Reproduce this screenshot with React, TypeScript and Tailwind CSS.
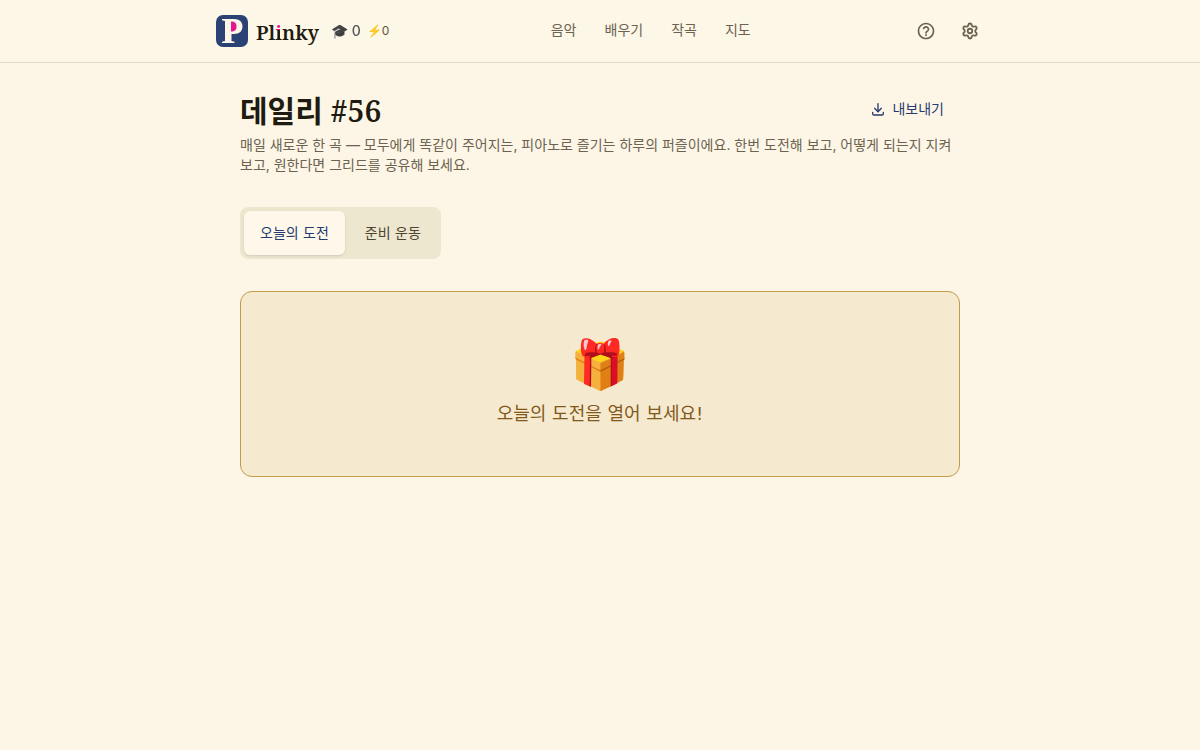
import { Settings } from "lucide-react";
import { useState } from "react";
import { MdHelpOutline } from "react-icons/md";
import { TbDownload } from "react-icons/tb";

const NAV_LINKS = [
  { href: "#music", label: "음악" },
  { href: "#learn", label: "배우기" },
  { href: "#compose", label: "작곡" },
  { href: "#map", label: "지도" },
];

const TABS = [
  { id: "today", label: "오늘의 도전" },
  { id: "warmup", label: "준비 운동" },
];

export default function App() {
  const [tab, setTab] = useState("today");

  return (
    <div className="min-h-screen bg-[#fdf6e7] font-['DejaVu_Sans','Noto_Sans_CJK_KR',sans-serif] text-[#1f1b10]">
      <Header />

      <main className="mx-auto max-w-3xl px-6 pt-7">
        <div className="flex items-start justify-between">
          <h1 className="font-['Noto_Serif','Noto_Sans_CJK_KR',serif] text-3xl leading-10 font-semibold">
            데일리 #56
          </h1>
          <button
            type="button"
            className="flex h-9 items-center gap-1.5 px-4 text-sm text-[#263a6e]"
          >
            <TbDownload className="size-4" aria-hidden="true" />
            내보내기
          </button>
        </div>
        <p className="mt-1 font-['Inter','Noto_Sans_CJK_KR',sans-serif] text-sm text-[#6b6350]">
          매일 새로운 한 곡 — 모두에게 똑같이 주어지는, 피아노로 즐기는 하루의
          퍼즐이에요. 한번 도전해 보고, 어떻게 되는지 지켜보고, 원한다면 그리드를
          공유해 보세요.
        </p>

        <div role="tablist" className="mt-8 inline-flex gap-1 rounded-lg bg-[#eee7d0] p-1">
          {TABS.map(({ id, label }) => (
            <button
              key={id}
              type="button"
              role="tab"
              aria-selected={tab === id}
              onClick={() => setTab(id)}
              className="h-11 rounded-md px-4 text-sm text-[#4b4432] aria-selected:bg-[#fdf8ea] aria-selected:text-[#263a6e] aria-selected:shadow-sm"
            >
              {label}
            </button>
          ))}
        </div>

        <button
          type="button"
          className="mt-8 flex w-full flex-col items-center gap-1 rounded-xl border border-[#c39a4e] bg-[#f5e9cf] px-6 pt-10 pb-12 text-[#83591b]"
        >
          <span className="text-5xl leading-16" aria-hidden="true">
            🎁
          </span>
          <span className="text-lg">오늘의 도전을 열어 보세요!</span>
        </button>
      </main>
    </div>
  );
}

function Header() {
  return (
    <header className="border-b border-[#e0d9c3] bg-[#fdf7e7]">
      <div className="mx-auto flex h-[62px] max-w-3xl items-center justify-between">
        <div className="flex items-center gap-3 pr-2">
          <a href="#home" className="flex items-center gap-2">
            <Logo />
            <span className="pt-1 font-['Noto_Serif',serif] text-xl font-semibold">
              Pl
              <span className="bg-linear-to-b from-[#e5178f] from-40% to-[#1f1b10] to-40% bg-clip-text text-transparent">
                i
              </span>
              nky
            </span>
          </a>
          <div className="flex items-center gap-1.5 font-['Inter',sans-serif] text-[#5c5545]">
            <span className="text-sm font-medium grayscale">🎓 0</span>
            <span className="text-xs">⚡0</span>
          </div>
        </div>

        <nav className="flex items-center gap-7 pb-0.5 text-sm text-[#6b6350]">
          {NAV_LINKS.map(({ href, label }) => (
            <a key={href} href={href}>
              {label}
            </a>
          ))}
        </nav>

        <div className="-mr-2 flex items-center text-[#6b6350]">
          <button type="button" aria-label="도움말" className="grid size-11 place-items-center">
            <MdHelpOutline className="size-5" />
          </button>
          <button type="button" aria-label="설정" className="grid size-11 place-items-center">
            <Settings className="size-[18px]" strokeWidth={2.4} />
          </button>
        </div>
      </div>
    </header>
  );
}

function Logo() {
  return (
    <svg viewBox="0 0 32 32" className="size-8" aria-hidden="true">
      <rect width="32" height="32" rx="7" fill="#2a4374" />
      <path
        d="M6 4h12c5.500 0 8.500 3 8.500 7.500s-3 7.500-8.500 7.500h-2.500v7l3 .8V28H6v-1.200l3-.8V6l-3-.800z"
        fill="#fdf6e8"
      />
      <path d="M15 6.500c4 0 5.500 1.800 5.500 5s-1.500 5-5.500 5z" fill="#e5178f" />
    </svg>
  );
}
